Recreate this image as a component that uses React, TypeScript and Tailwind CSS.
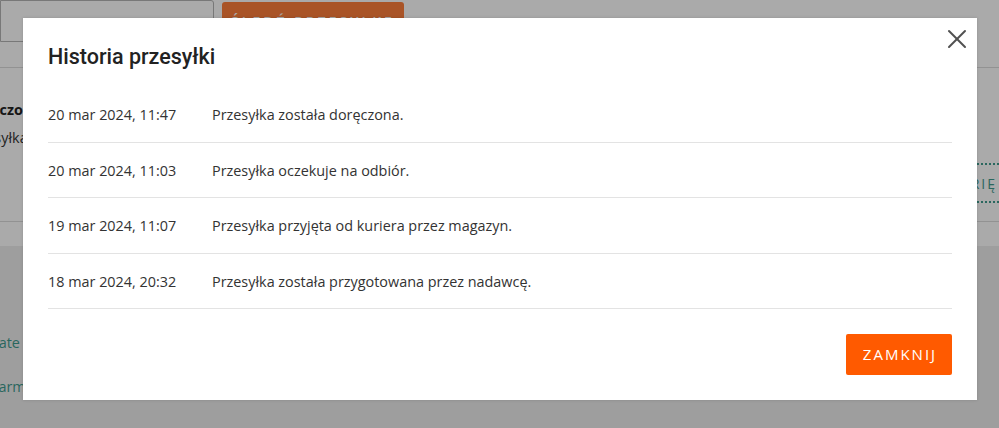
import { X } from "lucide-react";

const events = [
  { date: "20 mar 2024, 11:47", text: "Przesyłka została doręczona." },
  { date: "20 mar 2024, 11:03", text: "Przesyłka oczekuje na odbiór." },
  { date: "19 mar 2024, 11:07", text: "Przesyłka przyjęta od kuriera przez magazyn." },
  { date: "18 mar 2024, 20:32", text: "Przesyłka została przygotowana przez nadawcę." },
];

function Page() {
  return (
    <div className="h-[428px] overflow-hidden bg-white font-['Open_Sans',sans-serif] text-[14.4px] text-[#333]">
      {/* search bar */}
      <div className="h-[68px] border-b border-[#dcdcdc]">
        <div className="flex items-start gap-2">
          <div className="h-[42px] w-[214px] rounded-r-[3px] border border-[#b4b4b4]" />
          <button className="mt-[2px] h-[39px] w-[182px] rounded-[3px] bg-[#fe7f3b] text-[14px] font-semibold tracking-[3px] text-white">
            ŚLEDŹ PRZESYŁKĘ
          </button>
        </div>
      </div>

      {/* parcel summary */}
      <div className="flex h-[154px] justify-between border-b border-[#dcdcdc]">
        <div className="pt-[31px]">
          <p className="ml-[-35px] font-bold text-[#222]">Doręczona</p>
          <p className="ml-[-35px] mt-[6px]">Przesyłka</p>
        </div>
        <div className="mt-[95px] flex h-[40px] items-center border-y-2 border-dotted border-[#3f9b8d] pl-4 pr-[2px] text-[14px] tracking-[2px] text-[#3f9b8d]">
          HISTORIĘ
        </div>
      </div>

      <div className="h-[24px]" />

      {/* footer area */}
      <div className="h-full bg-[#ededed] pt-[86px] text-[#3f9b8d]">
        <p className="ml-[-25px]">Opłate</p>
        <p className="ml-[-9px] mt-[22px]">Farmacja</p>
      </div>
    </div>
  );
}

export default function App() {
  return (
    <div className="relative h-[428px] w-full overflow-hidden">
      <Page />

      {/* overlay */}
      <div className="absolute inset-0 bg-black/[0.335]" />

      {/* modal */}
      <div className="absolute left-[23px] top-[18px] w-[954px] bg-white px-[25px] pb-[25px] shadow-[0_0_3px_rgba(0,0,0,0.15)] font-['Open_Sans',sans-serif]">
        <button className="absolute right-[4px] top-[5px] text-[#505050]">
          <X size={32} strokeWidth={1.5} />
        </button>

        <h2 className="pt-[26px] pb-[17px] font-['Roboto',sans-serif] text-[21.5px] font-medium leading-[26px] text-[#222]">
          Historia przesyłki
        </h2>

        <div>
          {events.map((e) => (
            <div
              key={e.date}
              className="flex h-[55.5px] items-center border-b border-[#e3e3e3] pt-[2px] text-[14.4px] text-[#333]"
            >
              <span className="w-[164px] shrink-0">{e.date}</span>
              <span>{e.text}</span>
            </div>
          ))}
        </div>

        <div className="mt-[25px] flex justify-end">
          <button className="h-[41px] w-[106px] rounded-[2px] bg-[#ff5a00] pl-[2px] text-[15px] tracking-[2px] text-white">
            ZAMKNIJ
          </button>
        </div>
      </div>
    </div>
  );
}
